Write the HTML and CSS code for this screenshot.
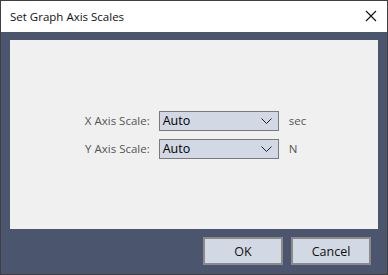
FILE: index.html
```html
<!DOCTYPE html>
<html lang="en">
<head>
    <meta charset="UTF-8">
    <title>Set Graph Axis Scales</title>
    <link rel="stylesheet" href="styles.css">
</head>
<body>
    <div class="window">
        <div class="title-bar">
            <span class="title">Set Graph Axis Scales</span>
            <svg class="close" width="12" height="12" viewBox="0 0 12 12">
                <path d="M1 1 L11 11 M11 1 L1 11" stroke="#111" stroke-width="1.1" fill="none"/>
            </svg>
        </div>

        <div class="content">
            <div class="panel">
                <div class="scale-form">
                    <label class="field-label">X Axis Scale:</label>
                    <div class="dropdown">
                        <span>Auto</span>
                        <svg width="11" height="6" viewBox="0 0 11 6"><path d="M0.5 0.5 L5.5 5.5 L10.5 0.5" stroke="#222" stroke-width="1" fill="none"/></svg>
                    </div>
                    <span class="unit">sec</span>

                    <label class="field-label">Y Axis Scale:</label>
                    <div class="dropdown">
                        <span>Auto</span>
                        <svg width="11" height="6" viewBox="0 0 11 6"><path d="M0.5 0.5 L5.5 5.5 L10.5 0.5" stroke="#222" stroke-width="1" fill="none"/></svg>
                    </div>
                    <span class="unit">N</span>
                </div>
            </div>
        </div>

        <div class="footer">
            <button class="btn">OK</button>
            <button class="btn">Cancel</button>
        </div>
    </div>
</body>
</html>
```

FILE: styles.css
```css
:root {
    --frame-color: #4b566e;
    --panel-color: #f0f0f0;
    --control-color: #d2d9e4;
}

* {
    box-sizing: border-box;
}

body {
    margin: 0;
    font-family: 'Open Sans', 'Noto Sans', Arial, sans-serif;
    font-size: 11.5px;
}

.window {
    width: 388px;
    height: 275px;
    border: 1px solid #3f3f3f;
    background-color: var(--frame-color);
    display: flex;
    flex-direction: column;
}

.title-bar {
    height: 31px;
    background-color: #fff;
    display: flex;
    align-items: center;
    justify-content: space-between;
    padding: 0 10px 1px 9px;
}

.title {
    color: #111;
    font-size: 11.5px;
}

.close {
    display: block;
}

.content {
    padding: 8px 9px 0 9px;
}

.panel {
    height: 189px;
    background-color: var(--panel-color);
    display: flex;
    align-items: center;
    justify-content: center;
}

.scale-form {
    display: grid;
    grid-template-columns: auto 120px auto;
    column-gap: 9px;
    row-gap: 8px;
    align-items: center;
    margin-left: 3px;
}

.field-label {
    text-align: right;
    color: #555;
}

.dropdown {
    height: 20px;
    background-color: var(--control-color);
    border: 1px solid #7a7a7a;
    display: flex;
    align-items: center;
    justify-content: space-between;
    padding: 0 6px 0 3px;
    color: #000;
    font-size: 12.5px;
}

.dropdown svg {
    display: block;
}

.unit {
    color: #555;
    padding-left: 1px;
}

.footer {
    display: flex;
    justify-content: flex-end;
    gap: 8px;
    padding: 8px 16px 0 0;
}

.btn {
    width: 80px;
    height: 28px;
    background-color: var(--control-color);
    border: 2px solid #8a8a8a;
    font-family: inherit;
    font-size: 12.5px;
    color: #111;
    padding: 0;
}
```
